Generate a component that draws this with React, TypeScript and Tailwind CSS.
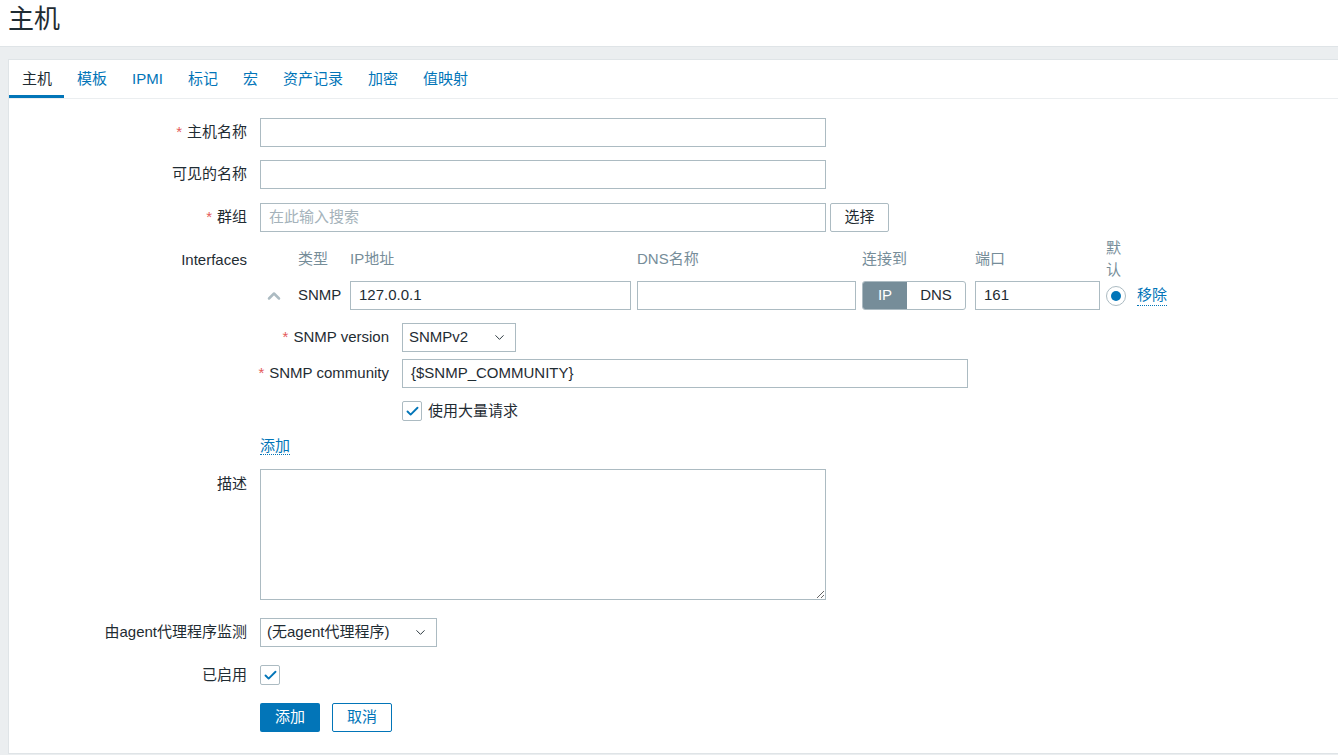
import { Check, ChevronDown, ChevronUp } from "lucide-react";

const tabs = ["主机", "模板", "IPMI", "标记", "宏", "资产记录", "加密", "值映射"];

function Req() {
  return <span className="mr-[5px] text-[#e45959]">*</span>;
}

function Label({ children, className = "" }: { children: React.ReactNode; className?: string }) {
  return (
    <div className={`flex w-[251px] shrink-0 justify-end whitespace-nowrap pr-[13px] ${className}`}>
      <span>{children}</span>
    </div>
  );
}

function SubLabel({ children }: { children: React.ReactNode }) {
  return (
    <div className="flex w-[142px] shrink-0 justify-end whitespace-nowrap pr-[13px]">
      <span>{children}</span>
    </div>
  );
}

function TextInput({ w, value, placeholder }: { w: string; value?: string; placeholder?: string }) {
  return (
    <div
      className={`flex h-[29px] ${w} items-center whitespace-nowrap border border-[#acbbc2] bg-white px-[8px] ${
        value ? "text-[#1f2c33]" : "text-[#a5b3bb]"
      }`}
    >
      {value ?? placeholder ?? ""}
    </div>
  );
}

function Select({ w, value }: { w: string; value: string }) {
  return (
    <div
      className={`flex h-[29px] ${w} items-center justify-between whitespace-nowrap border border-[#acbbc2] bg-white pl-[6px] pr-[8px]`}
    >
      <span>{value}</span>
      <ChevronDown className="h-[15px] w-[15px] text-[#1f2c33]" strokeWidth={1.5} />
    </div>
  );
}

function Checkbox() {
  return (
    <div className="flex h-[20px] w-[20px] items-center justify-center rounded-[2px] border border-[#acbbc2] bg-white">
      <Check className="h-[15px] w-[15px] text-[#0275b8]" strokeWidth={3} />
    </div>
  );
}

export default function App() {
  return (
    <div
      className="h-[755px] w-full overflow-hidden bg-[#ebeef0] text-[15px] text-[#1f2c33]"
      style={{ fontFamily: '"Liberation Sans", "Noto Sans CJK SC", sans-serif' }}
    >
      {/* 页头 */}
      <header className="h-[47px] border-b border-[#dfe4e7] bg-white pl-[8px] pt-[2px]">
        <h1 className="text-[26px] leading-[34px] font-normal">主机</h1>
      </header>

      <div className="ml-[8px] mr-[-20px] mt-[12px] border border-[#dfe4e7] bg-white pb-[21px]">
        {/* 标签页 */}
        <nav className="flex h-[39px] border-b border-[#ebeef0]">
          {tabs.map((t, i) => (
            <div
              key={t}
              className={`flex items-center whitespace-nowrap pl-[13px] pr-[12px] ${
                i === 0
                  ? "border-b-[3px] border-[#0275b8] pt-[3px] text-[#1f2c33]"
                  : "text-[#0275b8]"
              }`}
            >
              {t}
            </div>
          ))}
        </nav>

        <div className="pt-[19px]">
          <div className="flex items-center">
            <Label>
              <Req />
              主机名称
            </Label>
            <TextInput w="w-[566px]" />
          </div>

          <div className="mt-[13px] flex items-center">
            <Label>可见的名称</Label>
            <TextInput w="w-[566px]" />
          </div>

          <div className="mt-[14px] flex items-center">
            <Label>
              <Req />
              群组
            </Label>
            <TextInput w="w-[566px]" placeholder="在此输入搜索" />
            <button className="ml-[4px] h-[29px] w-[59px] rounded-[2px] border border-[#acbbc2] bg-white">
              选择
            </button>
          </div>

          {/* Interfaces */}
          <div className="mt-[5px] flex">
            <Label className="pt-[12px]">Interfaces</Label>
            <div>
              <div className="flex h-[44px] items-center text-[#768d99]">
                <div className="w-[38px]" />
                <div className="w-[52px]">类型</div>
                <div className="w-[287px]">IP地址</div>
                <div className="w-[225px]">DNS名称</div>
                <div className="w-[113px]">连接到</div>
                <div className="w-[131px]">端口</div>
                <div className="w-[20px] leading-[22px]">默认</div>
              </div>

              <div className="flex h-[29px] items-center">
                <div className="w-[38px] pl-[4px]">
                  <ChevronUp className="h-[20px] w-[20px] text-[#acbbc2]" strokeWidth={3} />
                </div>
                <div className="w-[52px]">SNMP</div>
                <div className="w-[287px]">
                  <TextInput w="w-[281px]" value="127.0.0.1" />
                </div>
                <div className="w-[225px]">
                  <TextInput w="w-[219px]" />
                </div>
                <div className="w-[113px]">
                  <div className="flex h-[29px] w-[104px] overflow-hidden rounded-[3px] border border-[#acbbc2]">
                    <div className="flex w-[44px] items-center justify-center bg-[#768d99] text-white">IP</div>
                    <div className="flex flex-1 items-center justify-center">DNS</div>
                  </div>
                </div>
                <div className="w-[131px]">
                  <TextInput w="w-[125px]" value="161" />
                </div>
                <div className="flex w-[31px] items-center">
                  <div className="flex h-[20px] w-[20px] items-center justify-center rounded-full border border-[#acbbc2] bg-white">
                    <div className="h-[10px] w-[10px] rounded-full bg-[#0275b8]" />
                  </div>
                </div>
                <span className="border-b border-dotted border-[#0275b8] leading-[20px] text-[#0275b8]">移除</span>
              </div>

              <div className="mt-[13px] flex items-center">
                <SubLabel>
                  <Req />
                  SNMP version
                </SubLabel>
                <Select w="w-[114px]" value="SNMPv2" />
              </div>

              <div className="mt-[7px] flex items-center">
                <SubLabel>
                  <Req />
                  SNMP community
                </SubLabel>
                <TextInput w="w-[566px]" value="{$SNMP_COMMUNITY}" />
              </div>

              <div className="mt-[12px] flex items-center pl-[142px]">
                <Checkbox />
                <span className="ml-[6px]">使用大量请求</span>
              </div>

              <div className="mt-[12px]">
                <span className="border-b border-dotted border-[#0275b8] leading-[20px] text-[#0275b8]">添加</span>
              </div>
            </div>
          </div>

          <div className="mt-[12px] flex">
            <Label className="pt-[4px]">描述</Label>
            <textarea className="h-[131px] w-[566px] border border-[#acbbc2] bg-white outline-none" />
          </div>

          <div className="mt-[18px] flex items-center">
            <Label>由agent代理程序监测</Label>
            <Select w="w-[177px]" value="(无agent代理程序)" />
          </div>

          <div className="mt-[17px] flex items-center">
            <Label>已启用</Label>
            <Checkbox />
          </div>

          <div className="mt-[16px] flex items-center pl-[251px]">
            <button className="h-[29px] w-[60px] rounded-[2px] bg-[#0275b8] text-white">添加</button>
            <button className="ml-[12px] h-[29px] w-[60px] rounded-[2px] border border-[#0275b8] bg-white text-[#0275b8]">
              取消
            </button>
          </div>
        </div>
      </div>
    </div>
  );
}
